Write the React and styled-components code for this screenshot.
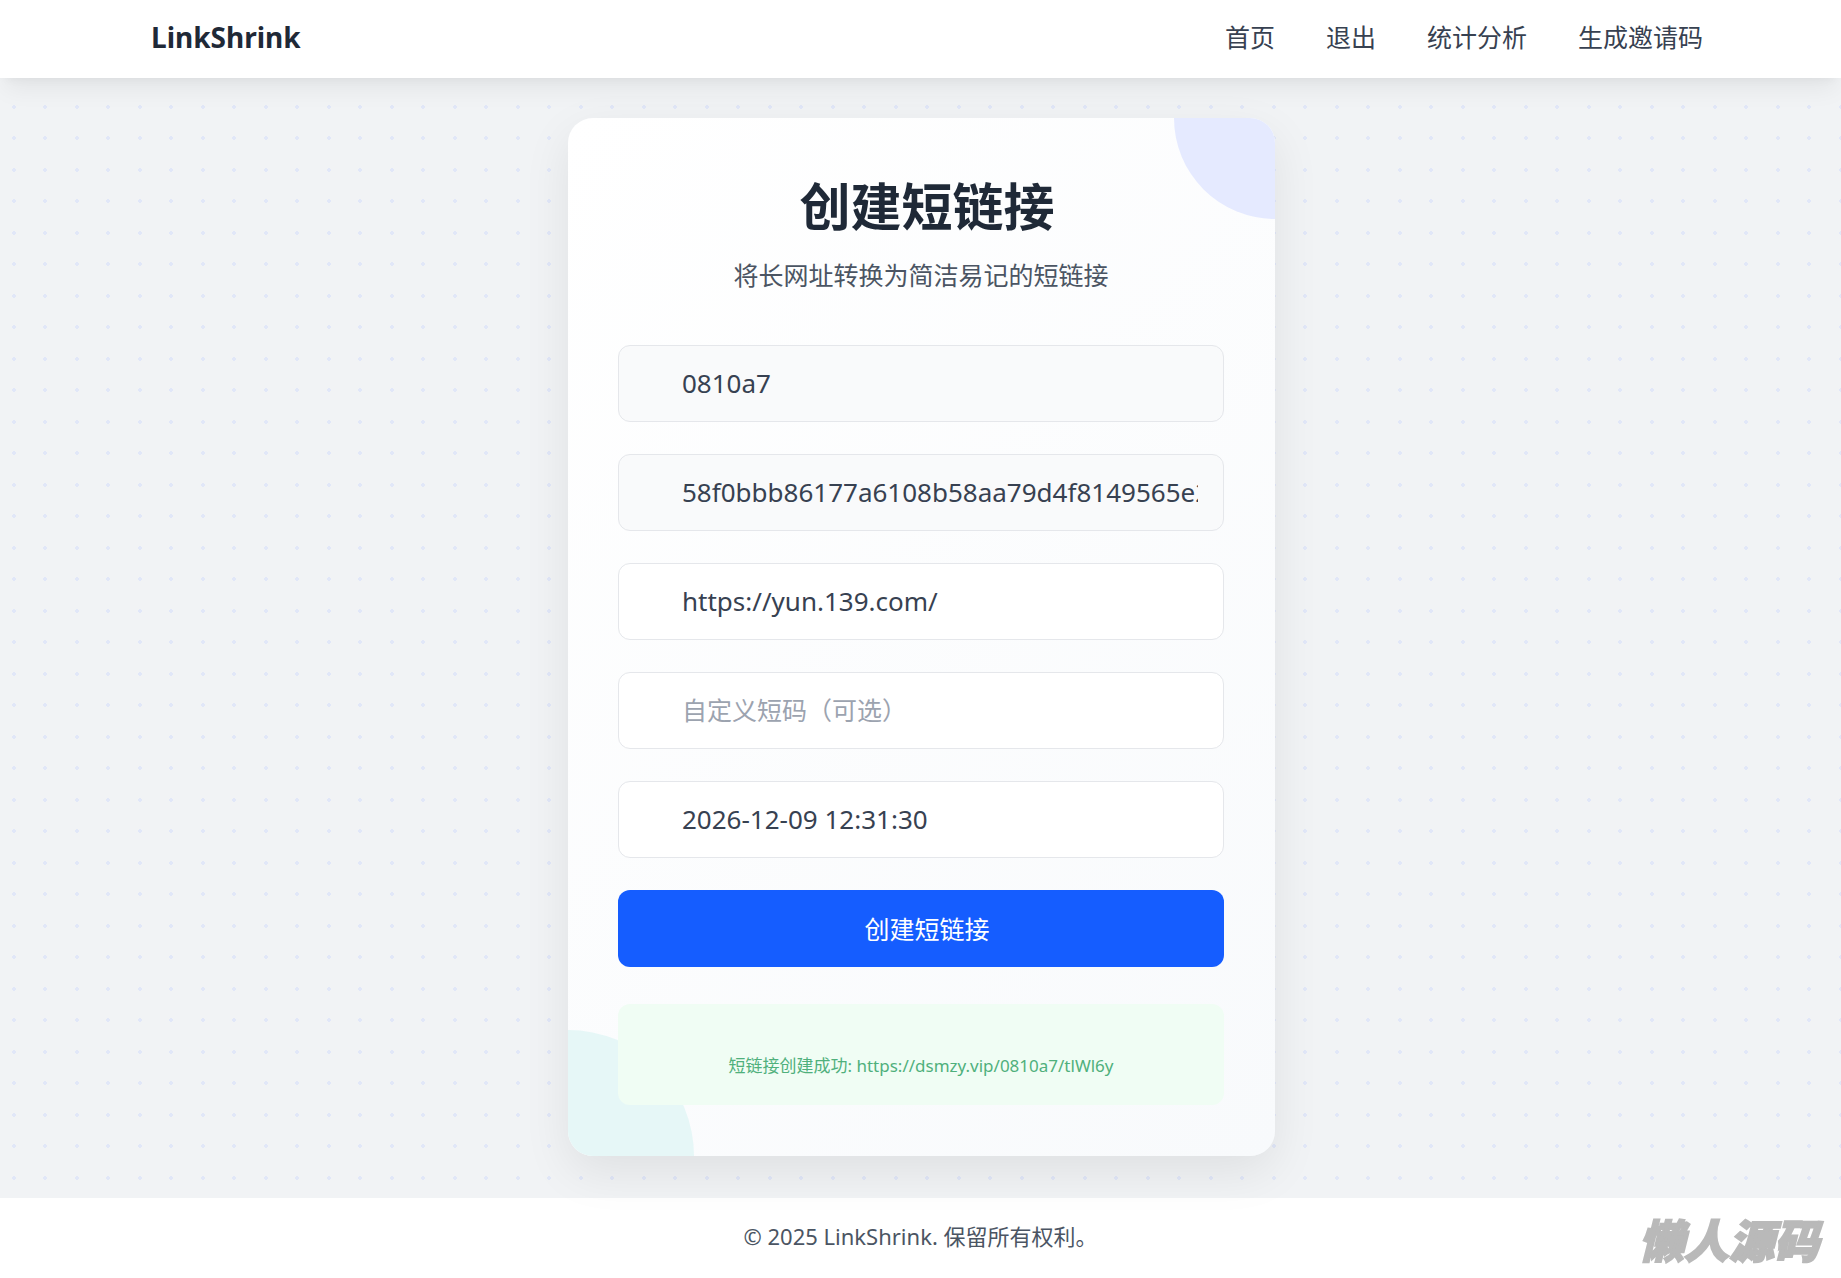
import React from "react";
import styled, { createGlobalStyle } from "styled-components";

const dot = (x, y) =>
  `radial-gradient(circle at ${x}px ${y}px, #e1e7f8 0, #e1e7f8 2px, transparent 2px)`;

const GlobalStyle = createGlobalStyle`
  *, *::before, *::after { box-sizing: border-box; }
  body {
    margin: 0;
    color: #1f2937;
    font-family: "Noto Sans", "Noto Sans CJK SC", sans-serif;
    background-color: #f1f3f5;
    background-image: ${dot(14, 12)}, ${dot(45, 12)}, ${dot(14, 44)}, ${dot(45, 44)};
    background-size: 63px 63px;
  }
`;

const Page = styled.div`
  min-height: 100vh;
  display: flex;
  flex-direction: column;
`;

const Header = styled.header`
  background: #fff;
  box-shadow: 0 16px 24px -5px rgba(0, 0, 0, 0.06), 0 6px 10px -6px rgba(0, 0, 0, 0.06);
`;

const HeaderInner = styled.div`
  display: flex;
  align-items: center;
  justify-content: space-between;
  height: 78px;
  padding: 0 138px;
`;

const Brand = styled.a`
  padding: 0 0 4px 13px;
  color: #1f2937;
  font-size: 28px;
  line-height: 40px;
  font-weight: 700;
  text-decoration: none;
`;

const Nav = styled.nav`
  display: flex;
  gap: 51px;
  padding-bottom: 4px;
`;

const NavLink = styled.a`
  color: #374151;
  font-size: 25px;
  line-height: 38px;
  text-decoration: none;
`;

const Main = styled.main`
  flex: 1;
  display: flex;
  justify-content: center;
  align-items: flex-start;
  padding: 40px 24px 40px 26px;
`;

const Card = styled.section`
  position: relative;
  width: 100%;
  max-width: 707px;
  padding: 50px 51px 51px 50px;
  overflow: hidden;
  border-radius: 25px;
  background: linear-gradient(135deg, #ffffff, #f8fafc);
  box-shadow: 0 16px 48px rgba(0, 0, 0, 0.08);
`;

const CornerTop = styled.div`
  position: absolute;
  top: -101px;
  right: -101px;
  width: 202px;
  height: 202px;
  border-radius: 50%;
  background: #e5eaff;
`;

const CornerBottom = styled.div`
  position: absolute;
  bottom: -126px;
  left: -126px;
  width: 252px;
  height: 252px;
  border-radius: 50%;
  background: #e6f7f7;
`;

const CardBody = styled.div`
  position: relative;
`;

const Title = styled.h1`
  margin: 0;
  padding-left: 12px;
  font-size: 51px;
  line-height: 76px;
  font-weight: 700;
  text-align: center;
`;

const Subtitle = styled.p`
  margin: 11px 0 50px;
  color: #4b5563;
  font-size: 25px;
  line-height: 40px;
  text-align: center;
`;

const Form = styled.form`
  display: flex;
  flex-direction: column;
  gap: 32px;
`;

const Field = styled.input`
  width: 100%;
  height: 77px;
  padding: 0 25px 1px 63px;
  border: 1px solid #e5e7eb;
  border-radius: 12px;
  outline: none;
  background: ${(p) => (p.readOnly ? "#f9fafb" : "#fff")};
  color: #374151;
  font-family: inherit;
  font-size: 26px;

  &::placeholder {
    color: #9ca3af;
    font-size: 25px;
    opacity: 1;
  }
`;

const Submit = styled.button`
  height: 77px;
  padding: 0 0 2px 12px;
  border: 0;
  border-radius: 12px;
  background: #155dff;
  color: #fff;
  font-family: inherit;
  font-size: 25px;
  cursor: pointer;
`;

const Result = styled.p`
  margin: 37px 0 0;
  padding: 50px 16px 27px;
  border-radius: 12px;
  background: #f0fdf4;
  color: #4fb07c;
  font-size: 17px;
  line-height: 24px;
  text-align: center;
`;

const Footer = styled.footer`
  padding: 18px 24px 22px;
  background: #fff;
  color: #4b5563;
  font-size: 22px;
  line-height: 40px;
  text-align: center;
`;

const Watermark = styled.div`
  position: fixed;
  right: 22px;
  bottom: 7px;
  color: #b9b9b9;
  font-size: 45px;
  line-height: 60px;
  font-weight: 900;
  font-style: italic;
  -webkit-text-stroke: 2px #b9b9b9;
`;

const links = ["首页", "退出", "统计分析", "生成邀请码"];

const fields = [
  { label: "用户编号", defaultValue: "0810a7", readOnly: true },
  { label: "密钥", defaultValue: "58f0bbb86177a6108b58aa79d4f8149565e2", readOnly: true },
  { label: "长网址", defaultValue: "https://yun.139.com/" },
  { label: "自定义短码", placeholder: "自定义短码（可选）" },
  { label: "过期时间", defaultValue: "2026-12-09 12:31:30" },
];

export default function App() {
  return (
    <>
      <GlobalStyle />
      <Page>
        <Header>
          <HeaderInner>
            <Brand href="#">LinkShrink</Brand>
            <Nav>
              {links.map((text) => (
                <NavLink key={text} href="#">{text}</NavLink>
              ))}
            </Nav>
          </HeaderInner>
        </Header>
        <Main>
          <Card>
            <CornerTop />
            <CornerBottom />
            <CardBody>
              <Title>创建短链接</Title>
              <Subtitle>将长网址转换为简洁易记的短链接</Subtitle>
              <Form onSubmit={(e) => e.preventDefault()}>
                {fields.map(({ label, ...rest }) => (
                  <Field key={label} type="text" aria-label={label} {...rest} />
                ))}
                <Submit type="submit">创建短链接</Submit>
              </Form>
              <Result>短链接创建成功: https://dsmzy.vip/0810a7/tlWl6y</Result>
            </CardBody>
          </Card>
        </Main>
        <Footer>© 2025 LinkShrink. 保留所有权利。</Footer>
      </Page>
      <Watermark>懒人源码</Watermark>
    </>
  );
}
